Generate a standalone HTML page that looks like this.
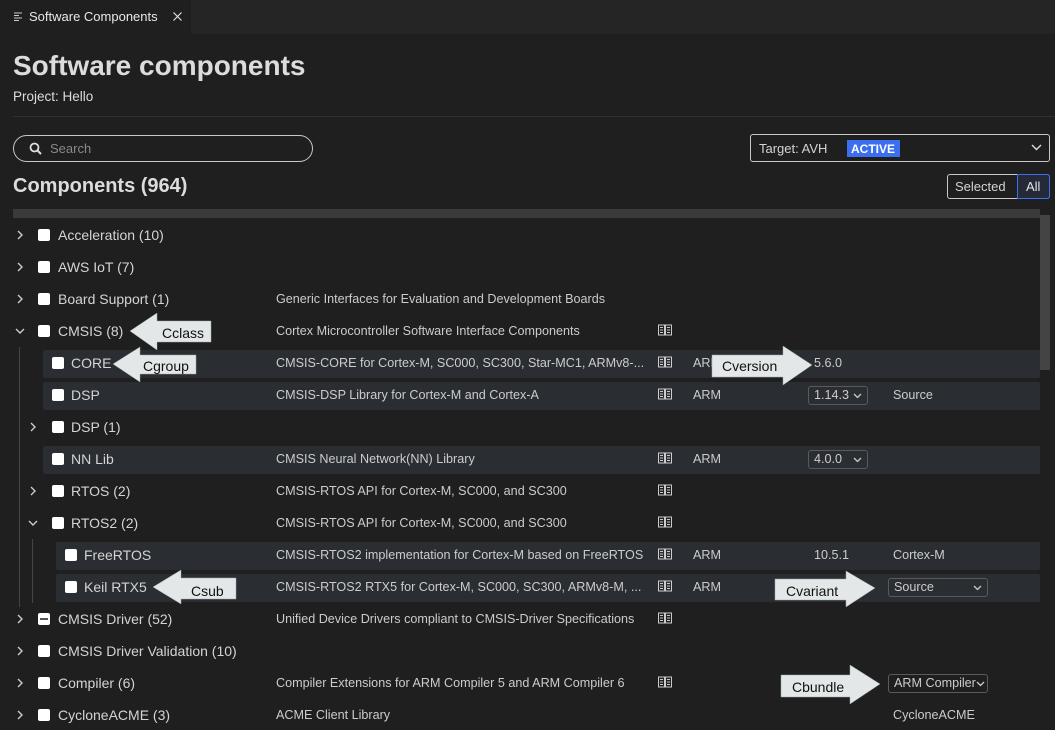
<!DOCTYPE html>
<html><head><meta charset="utf-8"><style>
*{margin:0;padding:0;box-sizing:border-box}
body{width:1055px;height:730px;overflow:hidden;background:#1f1f1f;font-family:"Liberation Sans",Arial,sans-serif;color:#cccccc;position:relative;font-size:13px}
.a{position:absolute;white-space:nowrap}
.row{position:absolute;left:0;width:1040px;height:28px}
.bg{background:#2a2d31;border-radius:2px}
.t{position:absolute;top:7px;font-size:12.6px;color:#cccccc;white-space:nowrap}
.lab{font-size:14px;top:6px;color:#d4d4d4}
.cb{position:absolute;top:8px;width:12px;height:12px;background:#fff;border-radius:2px}
.ch{position:absolute;top:8px;width:12px;height:12px}
.bk{position:absolute;top:7px;left:658px}
.sel{position:absolute;top:5px;height:19px;border:1px solid #5a5a5a;border-radius:3px;font-size:12.6px;padding:1px 5px;color:#cccccc}
.sel svg{position:absolute;right:5px;top:6px}
</style></head><body>
<div class="a" style="left:0;top:0;width:1055px;height:34px;background:#252526"></div>
<div class="a" style="left:0;top:0;width:191px;height:34px;background:#1f1f1f"></div>
<svg class="a" style="left:14px;top:12px" width="9" height="9" viewBox="0 0 9 9"><path d="M0 1h8M0 3.5h5M0 6h8M0 8.5h5" stroke="#ccc" stroke-width="1"/></svg>
<div class="a" style="left:29px;top:9px;font-size:13px;color:#e8e8e8">Software Components</div>
<svg class="a" style="left:173px;top:12px" width="9" height="9"><path d="M0.5 0.5l8 8M8.5 0.5l-8 8" stroke="#ddd" stroke-width="1.2"/></svg>

<div class="a" style="left:13px;top:50px;font-size:28px;font-weight:bold;color:#dcdcdc">Software components</div>
<div class="a" style="left:13px;top:89px;font-size:13.5px;color:#dcdcdc">Project: Hello</div>
<div class="a" style="left:13px;top:116px;width:1042px;height:1px;background:#2f2f2f"></div>

<div class="a" style="left:13px;top:135px;width:300px;height:27px;border:1px solid #c8c8c8;border-radius:14px"></div>
<svg class="a" style="left:29px;top:142px" width="13" height="13"><circle cx="5.5" cy="5.5" r="4" stroke="#ddd" stroke-width="1.8" fill="none"/><path d="M8.5 8.5l3.5 3.5" stroke="#ddd" stroke-width="2"/></svg>
<div class="a" style="left:50px;top:141px;font-size:13px;color:#8a8a8a">Search</div>

<div class="a" style="left:750px;top:134px;width:300px;height:28px;border:1px solid #c8c8c8;border-radius:3px"></div>
<div class="a" style="left:759px;top:141px;font-size:13px;color:#d4d4d4">Target: AVH</div>
<div class="a" style="left:847px;top:140px;width:53px;height:17px;background:#3b6ff0;color:#fff;font-weight:bold;font-size:12px;padding:2px 4px">ACTIVE</div>
<svg class="a" style="left:1031px;top:144px" width="11" height="7"><path d="M1 1l4.5 4.5L10 1" stroke="#ddd" stroke-width="1.4" fill="none"/></svg>

<div class="a" style="left:13px;top:175px;font-size:20px;font-weight:bold;color:#dcdcdc">Components (964)</div>
<div class="a" style="left:947px;top:174px;width:103px;height:25px;border:1px solid #c8c8c8;border-radius:3px"></div>
<div class="a" style="left:1017px;top:174px;width:33px;height:25px;border:1px solid #3b6ff0;border-radius:0 3px 3px 0;background:#252a38"></div>
<div class="a" style="left:955px;top:179px;font-size:13px;color:#d4d4d4">Selected</div>
<div class="a" style="left:1026px;top:179px;font-size:13px;color:#e4e4e4">All</div>

<div class="a" style="left:13px;top:209px;width:1027px;height:9px;background:#3a3a3a"></div>
<div class="a" style="left:1040px;top:215px;width:10px;height:155px;background:#444"></div>

<div class="a" style="left:19px;top:347px;width:1px;height:260px;background:#444"></div>
<div class="a" style="left:32px;top:539px;width:1px;height:64px;background:#444"></div>

<div class="row" style="top:221px"><svg class="ch" style="left:14px" viewBox="0 0 12 12"><path d="M4 2l4 4-4 4" stroke="#ccc" stroke-width="1.4" fill="none"/></svg><div class="cb" style="left:38px"></div><div class="t lab" style="left:58px">Acceleration (10)</div></div>
<div class="row" style="top:253px"><svg class="ch" style="left:14px" viewBox="0 0 12 12"><path d="M4 2l4 4-4 4" stroke="#ccc" stroke-width="1.4" fill="none"/></svg><div class="cb" style="left:38px"></div><div class="t lab" style="left:58px">AWS IoT (7)</div></div>
<div class="row" style="top:285px"><svg class="ch" style="left:14px" viewBox="0 0 12 12"><path d="M4 2l4 4-4 4" stroke="#ccc" stroke-width="1.4" fill="none"/></svg><div class="cb" style="left:38px"></div><div class="t lab" style="left:58px">Board Support (1)</div><div class="t" style="left:276px">Generic Interfaces for Evaluation and Development Boards</div></div>
<div class="row" style="top:317px"><svg class="ch" style="left:14px" viewBox="0 0 12 12"><path d="M2 4l4 4 4-4" stroke="#ccc" stroke-width="1.4" fill="none"/></svg><div class="cb" style="left:38px"></div><div class="t lab" style="left:58px">CMSIS (8)</div><div class="t" style="left:276px">Cortex Microcontroller Software Interface Components</div><svg class="bk" width="15" height="12"><path d="M0.5 1h6v10h-6zM7.5 1h6v10h-6zM2 3.5h3M2 6h3M2 8.5h3M9 3.5h3M9 6h3M9 8.5h3" stroke="#ccc" stroke-width="1" fill="none"/></svg></div>
<div class="row bg" style="top:350px;left:43px;width:997px"></div>
<div class="row" style="top:349px"><div class="cb" style="left:52px"></div><div class="t lab" style="left:71px">CORE</div><div class="t" style="left:276px">CMSIS-CORE for Cortex-M, SC000, SC300, Star-MC1, ARMv8-...</div><svg class="bk" width="15" height="12"><path d="M0.5 1h6v10h-6zM7.5 1h6v10h-6zM2 3.5h3M2 6h3M2 8.5h3M9 3.5h3M9 6h3M9 8.5h3" stroke="#ccc" stroke-width="1" fill="none"/></svg><div class="t" style="left:693px">ARM</div><div class="t" style="left:814px">5.6.0</div></div>
<div class="row bg" style="top:382px;left:43px;width:997px"></div>
<div class="row" style="top:381px"><div class="cb" style="left:52px"></div><div class="t lab" style="left:71px">DSP</div><div class="t" style="left:276px">CMSIS-DSP Library for Cortex-M and Cortex-A</div><svg class="bk" width="15" height="12"><path d="M0.5 1h6v10h-6zM7.5 1h6v10h-6zM2 3.5h3M2 6h3M2 8.5h3M9 3.5h3M9 6h3M9 8.5h3" stroke="#ccc" stroke-width="1" fill="none"/></svg><div class="t" style="left:693px">ARM</div><div class="sel" style="left:808px;width:60px">1.14.3<svg width="9" height="6"><path d="M1 1l3.5 3.5L8 1" stroke="#ccc" stroke-width="1.3" fill="none"/></svg></div><div class="t" style="left:893px">Source</div></div>
<div class="row" style="top:413px"><svg class="ch" style="left:27px" viewBox="0 0 12 12"><path d="M4 2l4 4-4 4" stroke="#ccc" stroke-width="1.4" fill="none"/></svg><div class="cb" style="left:52px"></div><div class="t lab" style="left:71px">DSP (1)</div></div>
<div class="row bg" style="top:446px;left:43px;width:997px"></div>
<div class="row" style="top:445px"><div class="cb" style="left:52px"></div><div class="t lab" style="left:71px">NN Lib</div><div class="t" style="left:276px">CMSIS Neural Network(NN) Library</div><svg class="bk" width="15" height="12"><path d="M0.5 1h6v10h-6zM7.5 1h6v10h-6zM2 3.5h3M2 6h3M2 8.5h3M9 3.5h3M9 6h3M9 8.5h3" stroke="#ccc" stroke-width="1" fill="none"/></svg><div class="t" style="left:693px">ARM</div><div class="sel" style="left:808px;width:60px">4.0.0<svg width="9" height="6"><path d="M1 1l3.5 3.5L8 1" stroke="#ccc" stroke-width="1.3" fill="none"/></svg></div></div>
<div class="row" style="top:477px"><svg class="ch" style="left:27px" viewBox="0 0 12 12"><path d="M4 2l4 4-4 4" stroke="#ccc" stroke-width="1.4" fill="none"/></svg><div class="cb" style="left:52px"></div><div class="t lab" style="left:71px">RTOS (2)</div><div class="t" style="left:276px">CMSIS-RTOS API for Cortex-M, SC000, and SC300</div><svg class="bk" width="15" height="12"><path d="M0.5 1h6v10h-6zM7.5 1h6v10h-6zM2 3.5h3M2 6h3M2 8.5h3M9 3.5h3M9 6h3M9 8.5h3" stroke="#ccc" stroke-width="1" fill="none"/></svg></div>
<div class="row" style="top:509px"><svg class="ch" style="left:27px" viewBox="0 0 12 12"><path d="M2 4l4 4 4-4" stroke="#ccc" stroke-width="1.4" fill="none"/></svg><div class="cb" style="left:52px"></div><div class="t lab" style="left:71px">RTOS2 (2)</div><div class="t" style="left:276px">CMSIS-RTOS API for Cortex-M, SC000, and SC300</div><svg class="bk" width="15" height="12"><path d="M0.5 1h6v10h-6zM7.5 1h6v10h-6zM2 3.5h3M2 6h3M2 8.5h3M9 3.5h3M9 6h3M9 8.5h3" stroke="#ccc" stroke-width="1" fill="none"/></svg></div>
<div class="row bg" style="top:542px;left:56px;width:984px"></div>
<div class="row" style="top:541px"><div class="cb" style="left:65px"></div><div class="t lab" style="left:84px">FreeRTOS</div><div class="t" style="left:276px">CMSIS-RTOS2 implementation for Cortex-M based on FreeRTOS</div><svg class="bk" width="15" height="12"><path d="M0.5 1h6v10h-6zM7.5 1h6v10h-6zM2 3.5h3M2 6h3M2 8.5h3M9 3.5h3M9 6h3M9 8.5h3" stroke="#ccc" stroke-width="1" fill="none"/></svg><div class="t" style="left:693px">ARM</div><div class="t" style="left:814px">10.5.1</div><div class="t" style="left:893px">Cortex-M</div></div>
<div class="row bg" style="top:574px;left:56px;width:984px"></div>
<div class="row" style="top:573px"><div class="cb" style="left:65px"></div><div class="t lab" style="left:84px">Keil RTX5</div><div class="t" style="left:276px">CMSIS-RTOS2 RTX5 for Cortex-M, SC000, SC300, ARMv8-M, ...</div><svg class="bk" width="15" height="12"><path d="M0.5 1h6v10h-6zM7.5 1h6v10h-6zM2 3.5h3M2 6h3M2 8.5h3M9 3.5h3M9 6h3M9 8.5h3" stroke="#ccc" stroke-width="1" fill="none"/></svg><div class="t" style="left:693px">ARM</div><div class="sel" style="left:888px;width:100px">Source<svg width="9" height="6"><path d="M1 1l3.5 3.5L8 1" stroke="#ccc" stroke-width="1.3" fill="none"/></svg></div></div>
<div class="row" style="top:605px"><svg class="ch" style="left:14px" viewBox="0 0 12 12"><path d="M4 2l4 4-4 4" stroke="#ccc" stroke-width="1.4" fill="none"/></svg><div class="cb" style="left:38px"><div style="position:absolute;left:2px;top:5px;width:8px;height:2px;background:#555"></div></div><div class="t lab" style="left:58px">CMSIS Driver (52)</div><div class="t" style="left:276px">Unified Device Drivers compliant to CMSIS-Driver Specifications</div><svg class="bk" width="15" height="12"><path d="M0.5 1h6v10h-6zM7.5 1h6v10h-6zM2 3.5h3M2 6h3M2 8.5h3M9 3.5h3M9 6h3M9 8.5h3" stroke="#ccc" stroke-width="1" fill="none"/></svg></div>
<div class="row" style="top:637px"><svg class="ch" style="left:14px" viewBox="0 0 12 12"><path d="M4 2l4 4-4 4" stroke="#ccc" stroke-width="1.4" fill="none"/></svg><div class="cb" style="left:38px"></div><div class="t lab" style="left:58px">CMSIS Driver Validation (10)</div></div>
<div class="row" style="top:669px"><svg class="ch" style="left:14px" viewBox="0 0 12 12"><path d="M4 2l4 4-4 4" stroke="#ccc" stroke-width="1.4" fill="none"/></svg><div class="cb" style="left:38px"></div><div class="t lab" style="left:58px">Compiler (6)</div><div class="t" style="left:276px">Compiler Extensions for ARM Compiler 5 and ARM Compiler 6</div><svg class="bk" width="15" height="12"><path d="M0.5 1h6v10h-6zM7.5 1h6v10h-6zM2 3.5h3M2 6h3M2 8.5h3M9 3.5h3M9 6h3M9 8.5h3" stroke="#ccc" stroke-width="1" fill="none"/></svg><div class="sel" style="left:888px;width:100px;overflow:hidden">ARM Compiler<svg width="9" height="6" style="right:2px"><path d="M1 1l3.5 3.5L8 1" stroke="#ccc" stroke-width="1.3" fill="none"/></svg></div></div>
<div class="row" style="top:701px"><svg class="ch" style="left:14px" viewBox="0 0 12 12"><path d="M4 2l4 4-4 4" stroke="#ccc" stroke-width="1.4" fill="none"/></svg><div class="cb" style="left:38px"></div><div class="t lab" style="left:58px">CycloneACME (3)</div><div class="t" style="left:276px">ACME Client Library</div><div class="t" style="left:893px">CycloneACME</div></div>

<svg class="a" style="left:0;top:0" width="1055" height="730">
<g fill="#e3e7e7" stroke="#9aa" stroke-width="0.5">
<polygon points="130,331 157,313 157,321 211,321 211,342 157,342 157,350"/>
<polygon points="113,364 140,347 140,355 196,355 196,374 140,374 140,382"/>
<polygon points="153,587 181,570 181,578 236,578 236,599 181,599 181,604"/>
<polygon points="812,365 783,346 783,355 712,355 712,377 783,377 783,385"/>
<polygon points="875,588 846,571 846,579 775,579 775,600 846,600 846,607"/>
<polygon points="880,684 850,665 850,675 781,675 781,697 850,697 850,704"/>
</g>
<g font-family="Liberation Sans, Arial, sans-serif" font-size="14" fill="#111">
<text x="162" y="338">Cclass</text>
<text x="143" y="371">Cgroup</text>
<text x="191" y="596">Csub</text>
<text x="722" y="371">Cversion</text>
<text x="786" y="596">Cvariant</text>
<text x="792" y="692">Cbundle</text>
</g>
</svg>
</body></html>
